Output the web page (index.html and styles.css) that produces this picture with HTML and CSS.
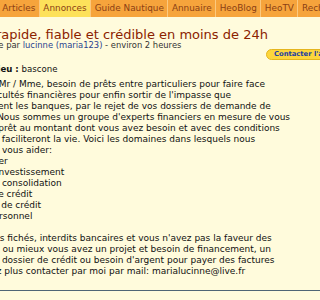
FILE: index.html
```html
<!DOCTYPE html>
<html lang="fr">
<head>
    <meta charset="UTF-8">
    <title>Prêt rapide, fiable et crédible en moins de 24h</title>
    <link rel="stylesheet" href="styles.css">
</head>
<body>
    <div class="page">
        <nav class="tabs">
            <a href="#">Accueil</a>
            <a href="#">Articles</a>
            <a href="#" class="on">Annonces</a>
            <a href="#">Guide Nautique</a>
            <a href="#">Annuaire</a>
            <a href="#">HeoBlog</a>
            <a href="#">HeoTV</a>
            <a href="#">Recherche</a>
        </nav>
        <div class="main">
            <h1>Prêt rapide, fiable et crédible en moins de 24h</h1>
            <p class="meta">Publiée par <a href="#">lucinne (maria123)</a> - environ 2 heures</p>
            <div class="actions">
                <a href="#" class="pill">Contacter l'annonceur</a>
            </div>
            <p class="place"><b>Lieu :</b> bascone</p>
            <div class="text">
                <p>Bonjour Mr / Mme, besoin de prêts entre particuliers pour faire face<br>
                aux difficultés financières pour enfin sortir de l'impasse que<br>
                provoquent les banques, par le rejet de vos dossiers de demande de<br>
                crédits. Nous sommes un groupe d'experts financiers en mesure de vous<br>
                faire un prêt au montant dont vous avez besoin et avec des conditions<br>
                qui vous faciliteront la vie. Voici les domaines dans lesquels nous<br>
                pouvons vous aider:<br>
                - Financier<br>
                - Prêt d'investissement<br>
                - Prêt de consolidation<br>
                - Prêts de crédit<br>
                - Rachat de crédit<br>
                - Prêt personnel</p>
                <p>Vous êtes fichés, interdits bancaires et vous n'avez pas la faveur des<br>
                banques ou mieux vous avez un projet et besoin de financement, un<br>
                mauvais dossier de crédit ou besoin d'argent pour payer des factures<br>
                n'hésitez plus contacter par moi par mail: marialucinne@live.fr</p>
            </div>
            <hr class="rule">
        </div>
    </div>
</body>
</html>
```

FILE: styles.css
```css
body {
    margin: 0;
    overflow: hidden;
    background-color: #fffbdc;
    font-family: "DejaVu Sans", Verdana, sans-serif;
    color: #111;
}
.page {
    width: 460px;
}
.tabs {
    display: flex;
    height: 17px;
    margin-left: -41px;
    background: #f6a43c;
}
.tabs a {
    padding: 0 3.5px;
    border-right: 1px solid #fbc97f;
    font-size: 8.9px;
    line-height: 17px;
    white-space: nowrap;
    color: #8b3f14;
    text-decoration: none;
}
.tabs a.on {
    background: #fde15a;
}
.main {
    margin-left: -40px;
    padding: 10px 0 0;
}
h1 {
    margin: 0;
    padding-left: 6px;
    font-size: 13px;
    font-weight: normal;
    line-height: 15px;
    white-space: nowrap;
    color: #8b2200;
}
.meta {
    margin: -2px 0 0;
    padding-left: 13px;
    font-size: 8.4px;
    line-height: 11px;
    color: #333;
}
.meta a {
    color: #2a3f8f;
    text-decoration: none;
}
.actions {
    display: flex;
    margin-top: -2px;
    padding-left: 306px;
}
.pill {
    padding: 0 7px;
    border: 1px solid #e5b51e;
    border-radius: 6px;
    background: #fdd63c;
    font-size: 6.8px;
    font-weight: bold;
    line-height: 9px;
    white-space: nowrap;
    color: #1c3fa3;
    text-decoration: none;
}
.place {
    margin: 4px 0 0;
    padding-left: 32px;
    font-size: 8.6px;
    line-height: 11px;
}
.text {
    padding-left: 1px;
}
.text p {
    margin: 4px 0 11px;
    font-size: 9px;
    line-height: 11px;
    white-space: nowrap;
}
.rule {
    margin: 13px 0 0;
    border: 0;
    border-top: 1px solid #4f6575;
}
```
